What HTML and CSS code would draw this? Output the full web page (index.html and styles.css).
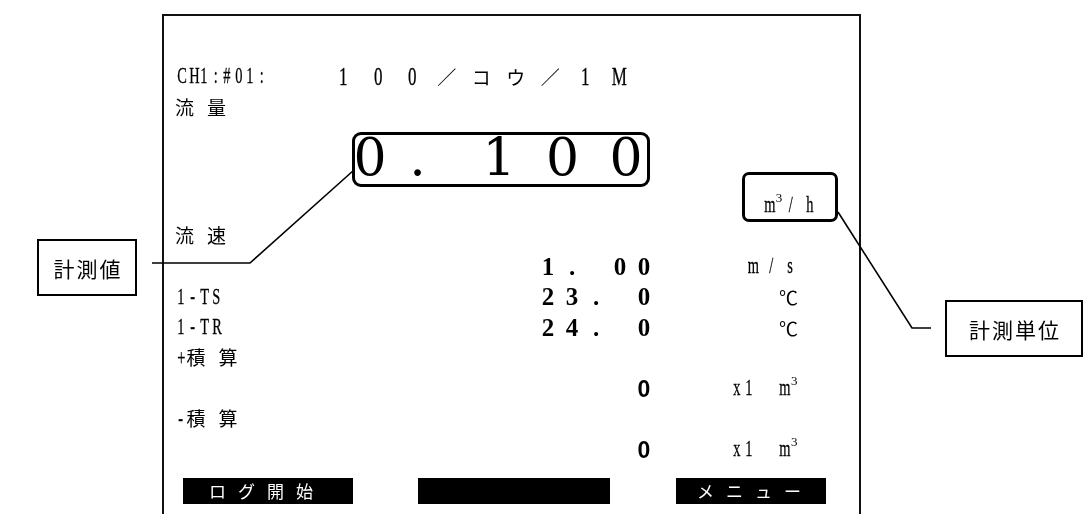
FILE: index.html
```html
<!DOCTYPE html>
<html lang="ja">
<head>
<meta charset="utf-8">
<title>流量計 計測画面</title>
<link rel="stylesheet" href="styles.css">
</head>
<body>
<div class="page">
  <div class="screen">
    <div class="row">
      <span class="g"><i>C</i><i>H</i><i>1</i><i>:</i><i>#</i><i>0</i><i>1</i><i>:</i></span>
      <span class="fw"><i>1</i><i>0</i><i>0</i><i class="j">／</i><i class="j">コ</i><i class="j">ウ</i><i class="j">／</i><i>1</i><i>M</i></span>
    </div>
    <div class="row"><span class="jp sp">流量</span></div>
    <div class="display">
      <div class="big-box"><span class="bd">0</span><span class="bp">.</span><span class="bd">1</span><span class="bd">0</span><span class="bd">0</span></div>
      <div class="unit-box"><span class="g"><i>m</i><sup>3</sup><i>/</i><i class="h">h</i></span></div>
    </div>
    <div class="data">
      <div class="drow"><span class="lbl jp sp">流速</span></div>
      <div class="drow">
        <span class="val"><i>1</i><i>.</i><i></i><i>0</i><i>0</i></span>
        <span class="unit u-ms g"><i>m</i><i>/</i><i>s</i></span>
      </div>
      <div class="drow">
        <span class="lbl g"><i>1</i><i>-</i><i>T</i><i>S</i></span>
        <span class="val"><i>2</i><i>3</i><i>.</i><i></i><i>0</i></span>
        <span class="unit u-c jp">℃</span>
      </div>
      <div class="drow">
        <span class="lbl g"><i>1</i><i>-</i><i>T</i><i>R</i></span>
        <span class="val"><i>2</i><i>4</i><i>.</i><i></i><i>0</i></span>
        <span class="unit u-c jp">℃</span>
      </div>
      <div class="drow"><span class="lbl"><span class="g"><i>+</i></span><span class="jp sp">積算</span></span></div>
      <div class="drow">
        <span class="val"><i class="z">0</i></span>
        <span class="unit g"><i>x</i><i>1</i><i></i><i></i><i>m</i><sup>3</sup></span>
      </div>
      <div class="drow"><span class="lbl"><span class="g"><i>-</i></span><span class="jp sp">積算</span></span></div>
      <div class="drow">
        <span class="val"><i class="z">0</i></span>
        <span class="unit g"><i>x</i><i>1</i><i></i><i></i><i>m</i><sup>3</sup></span>
      </div>
    </div>
    <div class="buttons">
      <div class="btn btn-log">ログ開始</div>
      <div class="btn btn-blank"></div>
      <div class="btn btn-menu">メニュー</div>
    </div>
  </div>

  <div class="callout callout-value">計測値</div>
  <div class="callout callout-unit">計測単位</div>

  <svg class="leaders" width="1083" height="514" viewBox="0 0 1083 514" aria-hidden="true">
    <polyline points="152,263 250,263 354,170"/>
    <polyline points="838,212 912,328 931,328"/>
  </svg>
</div>
</body>
</html>
```

FILE: styles.css
```css
* { box-sizing: border-box; margin: 0; padding: 0; }

html, body {
  width: 1083px;
  height: 514px;
  overflow: hidden;
  background: #fff;
}

body {
  font-family: "Liberation Serif", "Noto Sans CJK JP", serif;
  color: #000;
}

i { font-style: normal; }

.page {
  position: relative;
  width: 1083px;
  height: 514px;
  overflow: hidden;
  padding: 14px 0 0 162px;
  background: #fff;
  filter: grayscale(1);
}

/* main instrument screen */
.screen {
  width: 699px;
  height: 520px;
  border: 2px solid #111;
  border-bottom: 0;
  padding: 45.5px 0 0 11px;
  display: flex;
  flex-direction: column;
}

.row {
  flex: none;
  height: 30px;
  line-height: 30px;
  display: flex;
  align-items: center;
}

/* half-width character grid */
.g i {
  display: inline-block;
  width: 11.5px;
  text-align: center;
  font-size: 24px;
  transform: scaleX(.6);
  -webkit-text-stroke: .3px #000;
}

.g sup {
  display: inline-block;
  width: 11.5px;
  text-align: center;
  font-size: 13px;
  line-height: 0;
  vertical-align: 10px;
}

.jp {
  font-family: "Noto Sans CJK JP", sans-serif;
  font-size: 19px;
  font-weight: 400;
}

.sp { letter-spacing: 13px; }

/* full-width character grid in the header */
.fw {
  display: flex;
  margin-left: 59px;
}

.fw i {
  display: inline-block;
  width: 34.5px;
  text-align: center;
  font-size: 25px;
  transform: scaleX(.68);
  -webkit-text-stroke: .3px #000;
}

.fw i.j {
  font-family: "Noto Sans CJK JP", sans-serif;
  font-size: 19px;
  transform: none;
  -webkit-text-stroke: 0;
}

/* big reading */
.display {
  flex: none;
  height: 98.25px;
  display: flex;
  align-items: flex-start;
}

.big-box {
  flex: none;
  margin: 10.5px 0 0 177px;
  width: 298px;
  height: 55px;
  border: 3px solid #000;
  border-radius: 9px;
  display: flex;
  align-items: flex-start;
  font-family: "DejaVu Serif", serif;
  font-size: 52px;
  line-height: 44px;
}

.bd {
  flex: none;
  width: 63.5px;
  text-align: center;
}

.bd:first-child { margin-left: -16.75px; }

.bp {
  flex: none;
  width: 31.75px;
  margin-right: 33.75px;
  text-align: center;
}

.unit-box {
  flex: none;
  margin: 50.5px 0 0 92px;
  width: 96px;
  height: 50px;
  border: 3px solid #000;
  border-radius: 7px;
  padding: 19px 0 0 16.75px;
  line-height: 20px;
}

.unit-box .h { margin-left: 8px; }

/* data rows */
.data {
  flex: none;
  display: flex;
  flex-direction: column;
}

.drow {
  height: 30.5px;
  line-height: 30.5px;
  display: grid;
  grid-template-columns: 361px 120px 1fr;
  align-items: center;
}

.lbl { grid-column: 1; }

.val {
  grid-column: 2;
  display: flex;
  justify-content: flex-end;
  font-weight: bold;
  font-size: 25px;
}

.val i {
  flex: none;
  width: 24px;
  text-align: center;
}

.val i.z {
  font-family: "Liberation Sans", sans-serif;
  font-size: 23px;
}

.unit {
  grid-column: 3;
  padding-left: 75px;
}

.u-ms { padding-left: 88px; }
.u-ms i { width: 18.3px; }
.u-c { padding-left: 123px; }

/* soft-key bar */
.buttons {
  flex: none;
  height: 53.5px;
  display: flex;
  align-items: center;
  margin-left: 8px;
}

.btn {
  flex: none;
  height: 26px;
  background: #000;
  color: #fff;
  font-family: "Noto Sans CJK JP", sans-serif;
  font-size: 17px;
  letter-spacing: 12px;
  line-height: 26px;
}

.btn-log { width: 170px; padding-left: 26px; }
.btn-blank { width: 192px; margin-left: 65px; }
.btn-menu { width: 150px; margin-left: 66px; padding-left: 21px; }

/* annotation callouts */
.callout {
  position: absolute;
  border: 2px solid #000;
  background: #fff;
  display: flex;
  align-items: center;
  justify-content: center;
  padding-left: 2px;
  font-family: "Noto Sans CJK JP", sans-serif;
  font-size: 21px;
  letter-spacing: 2px;
}

.callout-value { left: 37px; top: 239px; width: 100px; height: 57px; }
.callout-unit { left: 945px; top: 300px; width: 138px; height: 57px; }

.leaders {
  position: absolute;
  left: 0;
  top: 0;
  width: 1083px;
  height: 514px;
  pointer-events: none;
}

.leaders polyline {
  fill: none;
  stroke: #000;
  stroke-width: 1.6;
}
```
